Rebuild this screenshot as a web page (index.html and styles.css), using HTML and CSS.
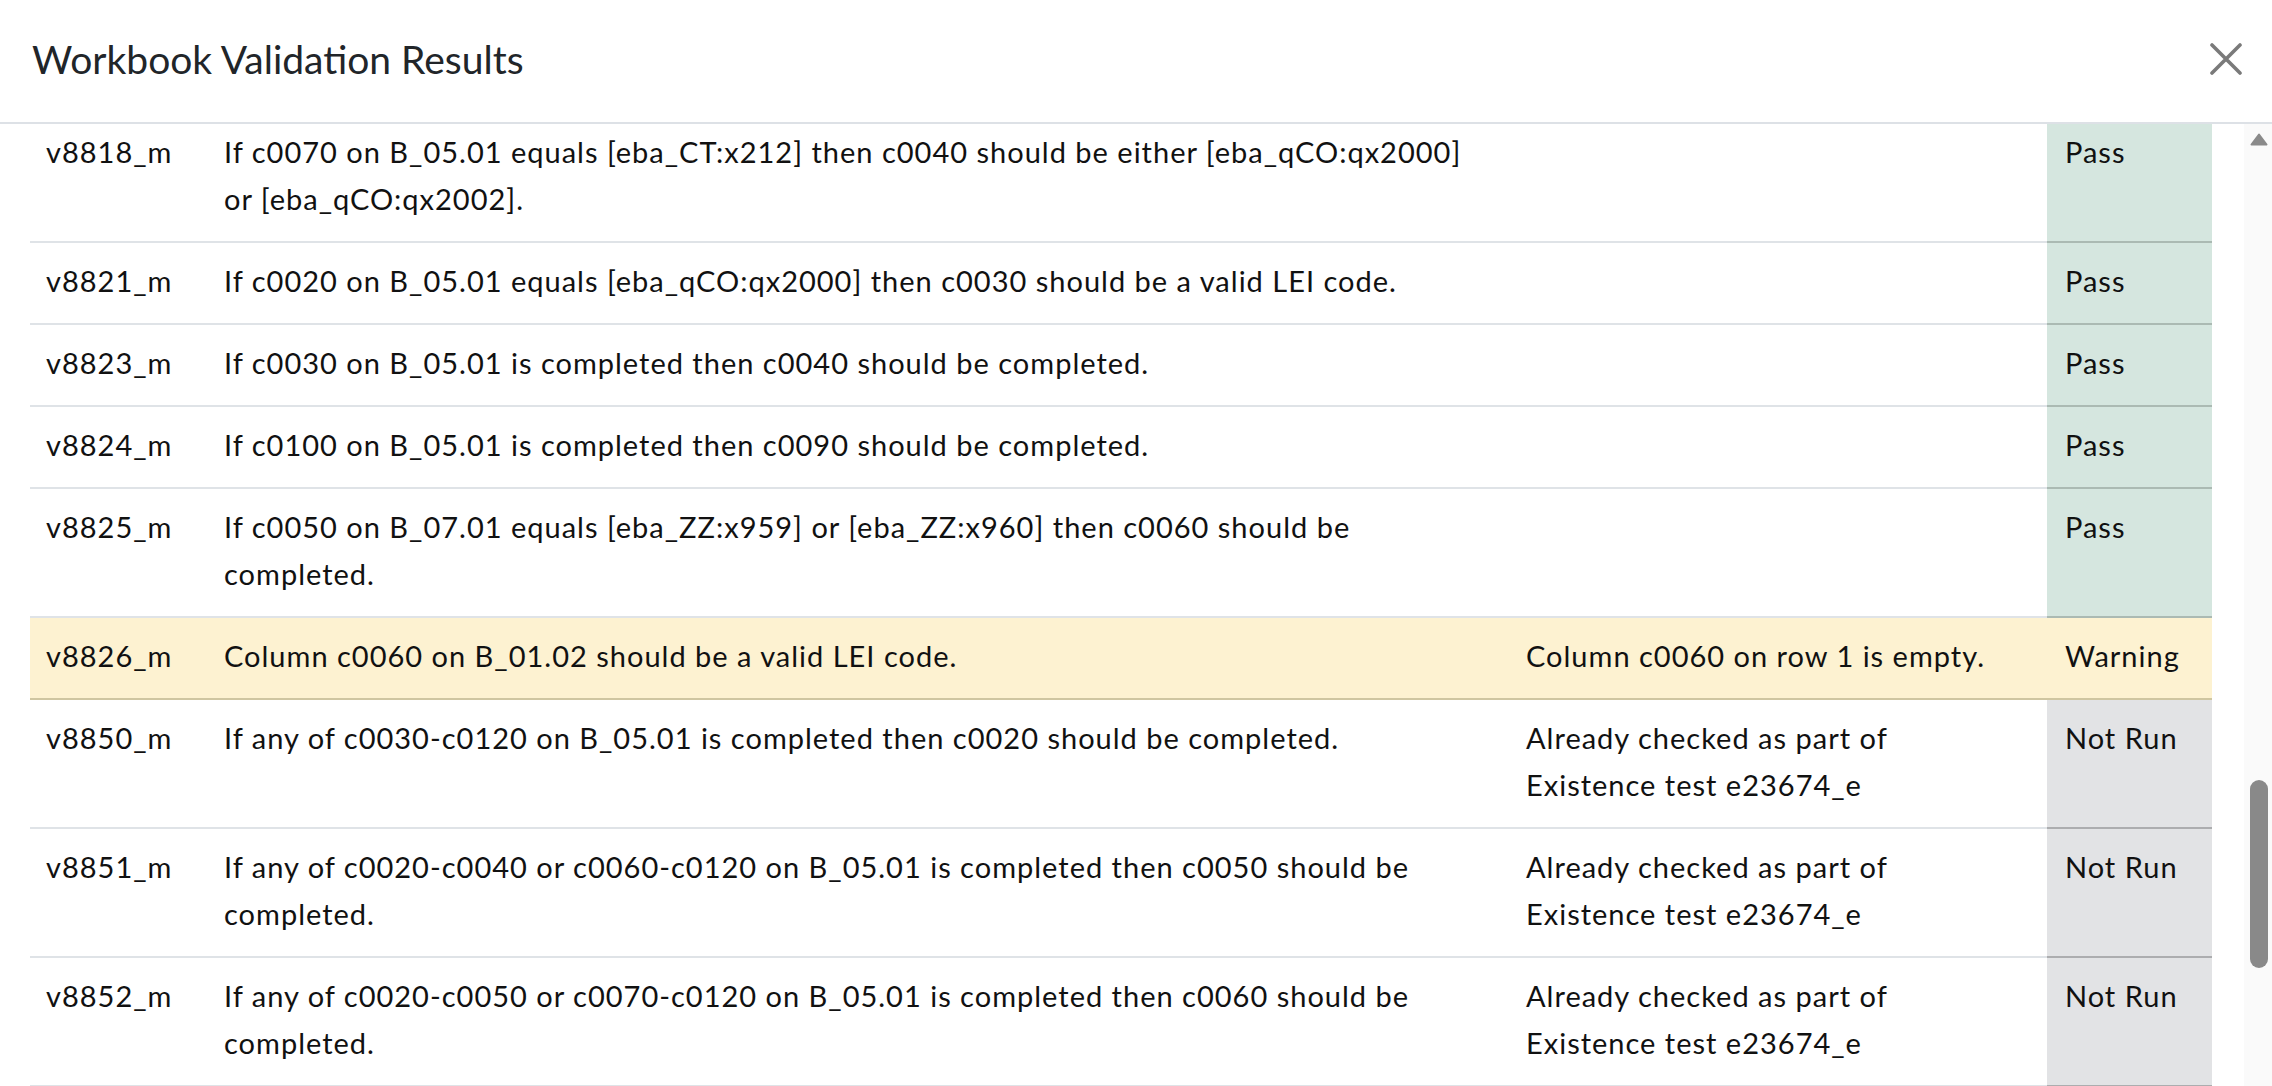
FILE: index.html
```html
<!DOCTYPE html>
<html lang="en">
<head>
<meta charset="utf-8">
<title>Workbook Validation Results</title>
<link rel="stylesheet" href="styles.css">
</head>
<body>
<div class="dialog">
  <header class="dlg-head">
    <h1 class="title">Workbook Validation Results</h1>
    <button class="close" aria-label="Close">
      <svg width="32" height="32" viewBox="0 0 32 32"><path d="M2 2 L30 30 M30 2 L2 30" stroke="#7a7a7a" stroke-width="3.6" stroke-linecap="round" fill="none"/></svg>
    </button>
  </header>
  <div class="dlg-body">
    <div class="scroll-view">
      <div class="table">
        <div class="row">
          <div class="cell id">v8818_m</div>
          <div class="cell desc">If c0070 on B_05.01 equals [eba_CT:x212] then c0040 should be either [eba_qCO:qx2000] or [eba_qCO:qx2002].</div>
          <div class="cell msg"></div>
          <div class="cell status pass">Pass</div>
        </div>
        <div class="row">
          <div class="cell id">v8821_m</div>
          <div class="cell desc">If c0020 on B_05.01 equals [eba_qCO:qx2000] then c0030 should be a valid LEI code.</div>
          <div class="cell msg"></div>
          <div class="cell status pass">Pass</div>
        </div>
        <div class="row">
          <div class="cell id">v8823_m</div>
          <div class="cell desc">If c0030 on B_05.01 is completed then c0040 should be completed.</div>
          <div class="cell msg"></div>
          <div class="cell status pass">Pass</div>
        </div>
        <div class="row">
          <div class="cell id">v8824_m</div>
          <div class="cell desc">If c0100 on B_05.01 is completed then c0090 should be completed.</div>
          <div class="cell msg"></div>
          <div class="cell status pass">Pass</div>
        </div>
        <div class="row">
          <div class="cell id">v8825_m</div>
          <div class="cell desc">If c0050 on B_07.01 equals [eba_ZZ:x959] or [eba_ZZ:x960] then c0060 should be completed.</div>
          <div class="cell msg"></div>
          <div class="cell status pass">Pass</div>
        </div>
        <div class="row warning">
          <div class="cell id">v8826_m</div>
          <div class="cell desc">Column c0060 on B_01.02 should be a valid LEI code.</div>
          <div class="cell msg">Column c0060 on row 1 is empty.</div>
          <div class="cell status">Warning</div>
        </div>
        <div class="row">
          <div class="cell id">v8850_m</div>
          <div class="cell desc">If any of c0030-c0120 on B_05.01 is completed then c0020 should be completed.</div>
          <div class="cell msg">Already checked as part of Existence test e23674_e</div>
          <div class="cell status notrun">Not Run</div>
        </div>
        <div class="row">
          <div class="cell id">v8851_m</div>
          <div class="cell desc">If any of c0020-c0040 or c0060-c0120 on B_05.01 is completed then c0050 should be completed.</div>
          <div class="cell msg">Already checked as part of Existence test e23674_e</div>
          <div class="cell status notrun">Not Run</div>
        </div>
        <div class="row">
          <div class="cell id">v8852_m</div>
          <div class="cell desc">If any of c0020-c0050 or c0070-c0120 on B_05.01 is completed then c0060 should be completed.</div>
          <div class="cell msg">Already checked as part of Existence test e23674_e</div>
          <div class="cell status notrun">Not Run</div>
        </div>
      </div>
    </div>
    <div class="scrollbar">
      <svg class="arrow" width="18" height="13" viewBox="0 0 18 13"><path d="M9 1.5 L16.5 11.5 L1.5 11.5 Z" fill="#8a8a8a" stroke="#8a8a8a" stroke-width="2" stroke-linejoin="round"/></svg>
      <div class="thumb" style="margin-top: 634px; height: 188px;"></div>
    </div>
  </div>
</div>
</body>
</html>
```

FILE: styles.css
```css
* { box-sizing: border-box; }

html, body {
  margin: 0;
  padding: 0;
  background: #ffffff;
  overflow: hidden;
}

body {
  font-family: "Lato", "Open Sans", sans-serif;
  color: #111111;
}

.dialog {
  width: 2272px;
  height: 1086px;
  display: flex;
  flex-direction: column;
  background: #ffffff;
}

.dlg-head {
  height: 124px;
  flex: 0 0 124px;
  display: flex;
  align-items: center;
  justify-content: space-between;
  padding: 0 30px 4px 32px;
  border-bottom: 2px solid #dde1e6;
}

.title {
  margin: 0;
  font-size: 39px;
  font-weight: 400;
  color: #212529;
  letter-spacing: 0;
}

.close {
  width: 32px;
  height: 32px;
  padding: 0;
  border: none;
  background: transparent;
  display: flex;
}

.dlg-body {
  flex: 1;
  display: flex;
  min-height: 0;
}

.scroll-view {
  flex: 1;
  overflow: hidden;
  padding-left: 30px;
}

.table {
  width: 2182px;
  margin-top: -10px;
}

.row {
  display: grid;
  grid-template-columns: 178px 1302px 537px 165px;
}

.cell {
  padding: 14px 16px 19px 16px;
  font-size: 29px;
  letter-spacing: 1px;
  line-height: 47px;
  border-bottom: 2px solid #dfe3e7;
}

.msg {
  padding-right: 40px;
}

.status {
  padding-left: 18px;
}

.status.pass {
  background: #d5e6df;
  border-bottom-color: #abbab3;
}

.status.notrun {
  background: #e2e3e5;
  border-bottom-color: #acadaf;
}

.row.warning .cell {
  background: #fdf2d1;
  border-bottom-color: #cfc6a1;
}

.scrollbar {
  flex: 0 0 28px;
  width: 28px;
  background: #fafafa;
  display: flex;
  flex-direction: column;
  align-items: flex-start;
  padding-left: 6px;
  padding-top: 9px;
}

.arrow {
  display: block;
  flex: 0 0 13px;
}

.thumb {
  width: 18px;
  background: #898989;
  border-radius: 9px;
}
```
